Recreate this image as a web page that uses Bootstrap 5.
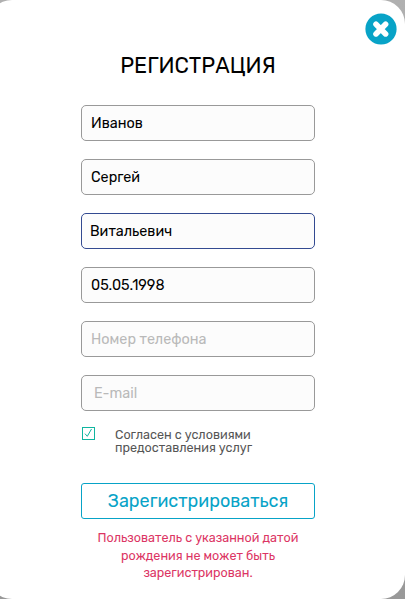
<!DOCTYPE html>
<html lang="ru">
<head>
<meta charset="utf-8">
<meta name="viewport" content="width=device-width, initial-scale=1">
<title>Регистрация</title>
<link href="https://cdn.jsdelivr.net/npm/bootstrap@5.3.0/dist/css/bootstrap.min.css" rel="stylesheet">
<style>
body{font-family:Rubik,Roboto,"Noto Sans",sans-serif;background:linear-gradient(#b0b0b0,#999);height:599px;overflow:hidden}
.dialog-panel{height:599px;margin-left:-12px;border-radius:24px;background:#fff;padding:53px 90px 0 93px}
.close-x{position:absolute;top:13px;right:8px;width:32px;height:32px;line-height:0}
.dialog-title{font-size:21.6px;line-height:26px;margin-bottom:26px;color:#000;font-weight:400}
.fields{gap:18px}
.field{height:36px;padding:0 9px;border:1px solid #999;border-radius:5px;background:#fcfcfc;font-size:14.4px;line-height:34px;color:#000;box-shadow:none!important}
.field::placeholder{color:#b9b9b9;opacity:1}
.field-active{border-color:#334a91;padding-left:8px}
.field-mail{padding-left:12px}
.agree{margin-top:16px;height:41px;padding-left:1px;gap:20px}
.agree-text{font-size:12.6px;line-height:13px;color:#555;padding-top:1px}
.agree svg{flex:none}
.send{height:36px;margin-top:15px;border:1px solid #08a3c7;border-radius:3px;color:#08a3c7;background:#fff;font-size:18px;line-height:34px;padding:0}
.error-text{color:#dc3564;font-size:12.6px;line-height:17.5px;margin-top:10px}
.t{white-space:nowrap}
</style>
</head>
<body>
<main class="dialog-panel">
  <button type="button" class="btn p-0 border-0 close-x" aria-label="Закрыть">
    <svg width="32" height="32" viewBox="0 0 32 32"><circle cx="16" cy="16" r="15.6" fill="#08a3c7"/><path d="M11 11.3L20.6 20.9M20.6 11.3L11 20.9" stroke="#fff" stroke-width="5.6" stroke-linecap="round"/></svg>
  </button>
  <h1 class="dialog-title text-center">РЕГИСТРАЦИЯ</h1>
  <form>
    <div class="d-flex flex-column fields">
      <input class="form-control field" value="Иванов">
      <input class="form-control field" value="Сергей">
      <input class="form-control field field-active" value="Витальевич">
      <input class="form-control field" value="05.05.1998">
      <input class="form-control field" placeholder="Номер телефона">
      <input class="form-control field field-mail" placeholder="E-mail">
    </div>
    <label class="d-flex align-items-start agree">
      <svg width="13" height="13" viewBox="0 0 13 13"><rect x=".5" y=".5" width="12" height="12" fill="#fff" stroke="#10b5a0"/><path d="M3 6.7L5.3 9.3L9.5 2" fill="none" stroke="#10b5a0"/></svg>
      <span class="agree-text t">Согласен с условиями<br>предоставления услуг</span>
    </label>
    <button type="button" class="btn w-100 d-block send t">Зарегистрироваться</button>
    <p class="error-text text-center mb-0 t">Пользователь с указанной датой<br>рождения не может быть<br>зарегистрирован.</p>
  </form>
</main>
<script src="https://cdn.jsdelivr.net/npm/bootstrap@5.3.0/dist/js/bootstrap.bundle.min.js"></script>
</body>
</html>
